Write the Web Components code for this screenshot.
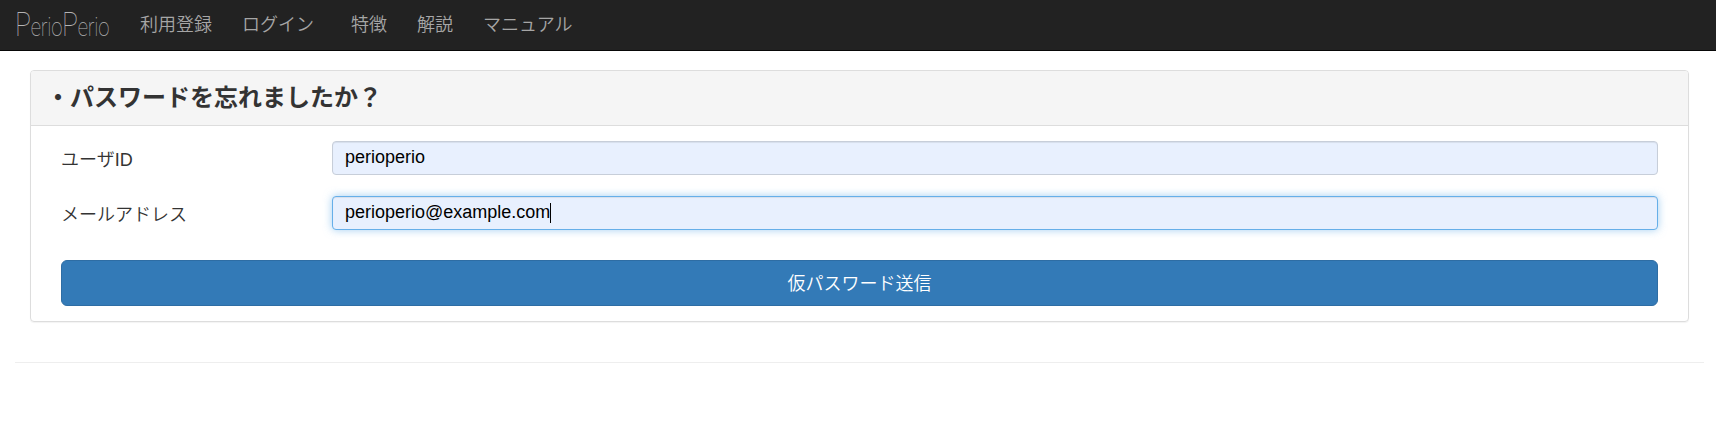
<!doctype html>
<html lang="ja"><head><meta charset="utf-8"><title>PerioPerio</title>
<style>
html,body{margin:0;background:#fff;color:#333;font-family:"Liberation Sans","Noto Sans CJK JP",sans-serif;}
</style></head><body>
<template id="t-bar"><style>
:host{display:flex;align-items:stretch;height:50px;background:#222;border-bottom:1px solid #080808;color:#a6a6a6;font-size:18px;line-height:20px;font-weight:350}
.nav{display:flex}.nav+.nav{margin-left:7px}
</style><slot name="brand"></slot><div class="nav"><slot name="a"></slot></div><div class="nav"><slot name="b"></slot></div></template>
<template id="t-brand"><style>
:host{display:block;width:95px;padding:0 15px;align-self:center}
.w{display:block;width:120px;transform:scaleX(.78);transform-origin:0 50%;font-family:Roboto,Lato,sans-serif;font-weight:100;color:#b4b4b4;white-space:nowrap;line-height:30px;font-size:26px;letter-spacing:-.3px}
.p{font-size:34px}
</style><span class="w"><span class="p">P</span>erio<span class="p">P</span>erio</span></template>
<template id="t-link"><style>
:host{display:flex;align-items:center;padding:0 15px}
</style><slot></slot></template>
<template id="t-panel"><style>
:host{display:block;margin:19px 15px 0;border:1px solid #ddd;border-radius:4px;box-shadow:0 1px 1px rgba(0,0,0,.05)}
header{padding:0 15px 6px;display:flex;align-items:center;background:#f5f5f5;border-bottom:1px solid #ddd;border-radius:3px 3px 0 0;height:48px;font-size:24px;font-weight:700;color:#333}
.body{padding:15px 30px;display:flex;flex-direction:column}
</style><header><slot name="title"></slot></header><div class="body"><slot></slot></div></template>
<template id="t-field"><style>
:host{display:grid;grid-template-columns:271px 1fr;align-items:center;margin-bottom:21px;font-size:18px;font-weight:350;color:#333}
.box{height:34px;box-sizing:border-box;border:1px solid #c7ced9;border-radius:4px;background:#e8f0fe;padding:0 12px 1px;display:flex;align-items:center;color:#000;font-weight:400;font-family:"Liberation Sans",sans-serif;box-shadow:inset 0 1px 1px rgba(0,0,0,.075)}
:host([focused]) .box{border-color:#66afe9;box-shadow:inset 0 1px 1px rgba(0,0,0,.075),0 0 8px rgba(102,175,233,.6)}
.caret{display:none;width:1px;height:20px;background:#000}
:host([focused]) .caret{display:block}
</style><label><slot name="label"></slot></label><div class="box"><slot></slot><span class="caret"></span></div></template>
<template id="t-btn"><style>
:host{display:flex;align-items:center;justify-content:center;height:46px;box-sizing:border-box;margin-top:9px;padding-bottom:3px;background:#337ab7;border:1px solid #2e6da4;border-radius:6px;color:#fff;font-size:18px;font-weight:350}
</style><slot></slot></template>
<template id="t-page"><style>
:host{display:block;box-sizing:border-box;padding:0 12px 0 15px}
hr{margin:40px 0 0;border:0;border-top:1px solid #eee}
</style><slot></slot><hr></template>
<script>
const def=(n,t)=>customElements.define(n,class extends HTMLElement{constructor(){super();this.attachShadow({mode:'open'}).appendChild(document.getElementById(t).content.cloneNode(true));}});
def('pp-bar','t-bar');def('pp-brand','t-brand');def('pp-link','t-link');def('pp-panel','t-panel');def('pp-field','t-field');def('pp-btn','t-btn');def('pp-page','t-page');
</script>
<pp-bar>
<pp-brand slot="brand"></pp-brand>
<pp-link slot="a">利用登録</pp-link><pp-link slot="a">ログイン</pp-link>
<pp-link slot="b">特徴</pp-link><pp-link slot="b">解説</pp-link><pp-link slot="b">マニュアル</pp-link>
</pp-bar>
<pp-page>
<pp-panel>
<span slot="title">・パスワードを忘れましたか？</span>
<pp-field><span slot="label">ユーザID</span>perioperio</pp-field>
<pp-field focused><span slot="label">メールアドレス</span>perioperio@example.com</pp-field>
<pp-btn>仮パスワード送信</pp-btn>
</pp-panel>
</pp-page>
</body></html>
